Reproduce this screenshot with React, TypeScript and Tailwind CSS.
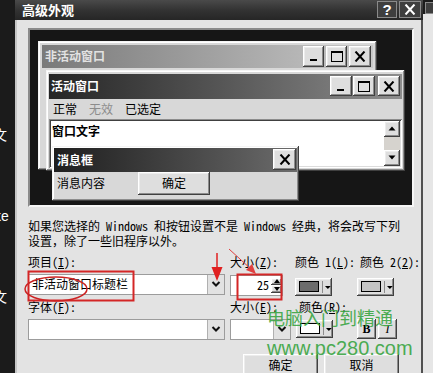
import React from "react";

const CJK = "font-['Noto_Sans_Mono_CJK_SC','Noto_Sans_CJK_SC',sans-serif]";
const CJKB = "font-['Noto_Sans_CJK_SC',sans-serif] font-bold";
const RAISED =
  "bg-[#dedede] shadow-[inset_-1px_-1px_0_#404040,inset_1px_1px_0_#ffffff,inset_-2px_-2px_0_#8c8c8c,inset_2px_2px_0_#ececec]";
const FRAME =
  "bg-[#d8d8d8] shadow-[inset_-1px_-1px_0_#404040,inset_1px_1px_0_#f4f4f4,inset_-2px_-2px_0_#8c8c8c,inset_2px_2px_0_#ffffff]";
const SUNKEN =
  "bg-white shadow-[inset_1px_1px_0_#8c8c8c,inset_-1px_-1px_0_#ffffff,inset_2px_2px_0_#404040,inset_-2px_-2px_0_#dcdcdc]";

type Kind = "min" | "max" | "close";

function Glyph({ kind }: { kind: Kind }) {
  if (kind === "min")
    return (
      <svg width="12" height="11" viewBox="0 0 12 11">
        <rect x="2" y="8" width="7" height="2" fill="#000" />
      </svg>
    );
  if (kind === "max")
    return (
      <svg width="12" height="11" viewBox="0 0 12 11">
        <rect x="0.5" y="0.5" width="11" height="10" fill="none" stroke="#000" />
        <rect x="0" y="0" width="12" height="2" fill="#000" />
      </svg>
    );
  return (
    <svg width="12" height="11" viewBox="0 0 12 11">
      <path d="M1.5 0.5 L10.5 10.5 M10.5 0.5 L1.5 10.5" stroke="#000" strokeWidth="2" />
    </svg>
  );
}

function CapBtn({ kind, className }: { kind: Kind; className: string }) {
  return (
    <div className={`flex items-center justify-center ${RAISED} ${className}`}>
      <Glyph kind={kind} />
    </div>
  );
}

function Chevron() {
  return (
    <svg width="10" height="8" viewBox="0 0 10 8">
      <path d="M1.5 2 L5 5.5 L8.5 2" fill="none" stroke="#111" strokeWidth="2" />
    </svg>
  );
}

function Combo({ className, children }: { className: string; children?: React.ReactNode }) {
  return (
    <div className={`flex h-[21px] border border-[#9c9c9c] bg-white ${className}`}>
      <div className="flex flex-1 items-center pl-[2px] text-[12px] text-black">{children}</div>
      <div className="flex w-[17px] items-center justify-center border-l border-[#b0b0b0] bg-[#e2e2e2]">
        <Chevron />
      </div>
    </div>
  );
}

function ColorBtn({ swatch }: { swatch: string }) {
  return (
    <div className={`flex h-[18px] w-[37px] items-center pl-[4px] ${RAISED}`}>
      <div className={`h-[11px] w-[21px] border border-black ${swatch}`} />
      <div className="ml-[3px] h-[12px] w-px bg-[#8c8c8c]" />
      <svg width="8" height="6" viewBox="0 0 8 6" className="ml-[1px]">
        <path d="M1 2 L7 2 L4 5 Z" fill="#000" />
      </svg>
    </div>
  );
}

function Tri({ up }: { up?: boolean }) {
  return (
    <svg width="8" height="5" viewBox="0 0 8 5">
      <path d={up ? "M4 0.5 L7.5 4.5 L0.5 4.5 Z" : "M0.5 0.5 L7.5 0.5 L4 4.5 Z"} fill="#000" />
    </svg>
  );
}

function Preview() {
  return (
    <div className="ml-[0px] h-[179px] w-[386px] border-2 border-t-[#8a8a8a] border-l-[#8a8a8a] border-b-[#f6f6f6] border-r-[#f6f6f6] bg-[#161616]">
      <div className="relative h-full w-full">
        {/* inactive window */}
        <div className={`absolute left-[8px] top-[11px] h-[129px] w-[339px] p-[4px] ${FRAME}`}>
          <div className="flex h-[23px] items-center bg-linear-to-r from-[#7a7a7a] to-[#c8c8c8] pl-[3px] pr-[2px]">
            <span className={`text-[12px] text-[#e2e2e2] ${CJKB}`}>非活动窗口</span>
            <div className="ml-auto flex gap-[2px]">
              <CapBtn kind="min" className="h-[21px] w-[21px]" />
              <CapBtn kind="max" className="h-[21px] w-[21px]" />
              <CapBtn kind="close" className="h-[21px] w-[22px]" />
            </div>
          </div>
        </div>

        {/* active window */}
        <div className={`absolute left-[16px] top-[40px] flex h-[101px] w-[359px] flex-col p-[3px] pt-[4px] ${FRAME}`}>
          <div className="flex h-[25px] items-center bg-linear-to-r from-[#262626] to-[#8e8e8e] pl-[2px] pr-[2px]">
            <span className={`text-[12px] text-white ${CJKB}`}>活动窗口</span>
            <div className="ml-auto flex">
              <CapBtn kind="min" className="h-[20px] w-[22px]" />
              <CapBtn kind="max" className="ml-px h-[20px] w-[22px]" />
              <CapBtn kind="close" className="ml-[3px] h-[20px] w-[22px]" />
            </div>
          </div>
          <div className={`flex h-[20px] items-center gap-[12px] pl-[4px] text-[12px] text-black ${CJK}`}>
            <span>正常</span>
            <span className="text-[#8c8c8c]">无效</span>
            <span>已选定</span>
          </div>
          <div className={`flex flex-1 p-[2px] ${SUNKEN}`}>
            <div className={`flex-1 pl-[1px] pt-[2px] text-[12px] leading-[15px] text-black ${CJKB}`}>窗口文字</div>
            <div className="flex w-[16px] flex-col bg-[#d6d3ce]">
              <div className={`flex h-[16px] items-center justify-center ${RAISED}`}>
                <Tri up />
              </div>
              <div className="flex-1" />
              <div className={`flex h-[16px] items-center justify-center ${RAISED}`}>
                <Tri />
              </div>
            </div>
          </div>
        </div>

        {/* message box */}
        <div className={`absolute left-[22px] top-[116px] flex h-[55px] w-[247px] flex-col p-[2px] ${FRAME}`}>
          <div className="flex h-[24px] items-center bg-linear-to-r from-[#1f1f1f] to-[#6c6c6c] pl-[3px] pr-px">
            <span className={`text-[12px] text-white ${CJKB}`}>消息框</span>
            <CapBtn kind="close" className="ml-auto h-[21px] w-[23px]" />
          </div>
          <div className="flex flex-1 items-start pl-[3px]">
            <span className={`pt-[3px] text-[12px] leading-[15px] text-black ${CJK}`}>消息内容</span>
            <div className={`ml-[33px] flex h-[23px] w-[72px] items-center justify-center text-[12px] text-black ${CJK} ${RAISED}`}>
              确定
            </div>
          </div>
        </div>
      </div>
    </div>
  );
}

function Label({ children, className = "" }: { children: React.ReactNode; className?: string }) {
  return (
    <div className={`h-[14px] whitespace-nowrap text-[12px] leading-[14px] text-black ${CJK} ${className}`}>{children}</div>
  );
}

export default function App() {
  return (
    <div className={`relative flex h-[373px] w-[433px] overflow-hidden bg-[#1b1b1b] ${CJK}`}>
      {/* desktop strip left */}
      <div className="relative w-[15px] shrink-0 overflow-hidden text-[14px] text-white">
        <span className="absolute left-[-7px] top-[124px]">文</span>
        <span className="absolute left-[-6px] top-[206px] font-['Liberation_Sans',sans-serif]">ke</span>
        <span className="absolute left-[-7px] top-[286px]">文</span>
      </div>

      {/* dialog */}
      <div className="flex w-[408px] shrink-0 flex-col">
        <div className="flex h-[22px] items-center bg-linear-to-b from-[#4a4a4a] via-[#333333] to-[#262626] pl-[7px] pr-[2px]">
          <span className={`text-[13px] text-white ${CJKB}`}>高级外观</span>
          <div className="ml-auto flex gap-[2px]">
            <div className="flex h-[17px] w-[20px] items-center justify-center border border-[#8a8a8a] bg-[#3e3e3e] text-[15px] font-bold leading-none text-white font-['Liberation_Sans',sans-serif]">
              ?
            </div>
            <div className="flex h-[17px] w-[22px] items-center justify-center border border-[#8a8a8a] bg-[#3e3e3e]">
              <svg width="12" height="11" viewBox="0 0 12 11">
                <path d="M1.5 0.5 L10.5 10.5 M10.5 0.5 L1.5 10.5" stroke="#fff" strokeWidth="2" />
              </svg>
            </div>
          </div>
        </div>

        <div className="flex flex-1 flex-col border-l-2 border-r-2 border-l-[#c6c6c6] border-r-[#505050] bg-[#e3e3e3] pl-[11px] pt-[8px]">
          <Preview />

          <div className="mt-[11px] text-[12px] leading-[15px] text-black">
            <div className="whitespace-nowrap">如果您选择的 Windows 和按钮设置不是 Windows 经典，将会改写下列</div>
            <div className="whitespace-nowrap">设置，除了一些旧程序以外。</div>
          </div>

          {/* row 1 */}
          <div className="mt-[7px] flex">
            <div className="w-[197px]">
              <Label>
                项目(<span className="underline">I</span>):
              </Label>
              <Combo className="mt-[5px] w-[197px]">
                <span className="pl-[1px]">非活动窗口标题栏</span>
              </Combo>
            </div>
            <div className="ml-[5px] w-[62px]">
              <Label>
                大小(<span className="underline">Z</span>):
              </Label>
              <div className="mt-[6px] flex h-[21px] w-[53px] border border-[#9c9c9c] bg-white">
                <div className="flex flex-1 items-center justify-end pr-[2px] text-[12px] text-black">25</div>
                <div className="flex w-[11px] flex-col py-[2px]">
                  <div className={`flex flex-1 items-center justify-center ${RAISED}`}>
                    <svg width="6" height="4" viewBox="0 0 6 4">
                      <path d="M3 0 L6 4 L0 4 Z" fill="#000" />
                    </svg>
                  </div>
                  <div className={`flex flex-1 items-center justify-center ${RAISED}`}>
                    <svg width="6" height="4" viewBox="0 0 6 4">
                      <path d="M0 0 L6 0 L3 4 Z" fill="#000" />
                    </svg>
                  </div>
                </div>
              </div>
            </div>
            <div className="ml-[3px] w-[40px]">
              <Label>
                颜色 1(<span className="underline">L</span>):
              </Label>
              <div className="mt-[9px]">
                <ColorBtn swatch="bg-[#6c6c6c]" />
              </div>
            </div>
            <div className="ml-[22px] w-[40px]">
              <Label className="pl-[3px]">
                颜色 2(<span className="underline">2</span>):
              </Label>
              <div className="mt-[9px]">
                <ColorBtn swatch="bg-[#c4c4c4]" />
              </div>
            </div>
          </div>

          {/* row 2 */}
          <div className="mt-[4px] flex">
            <div className="w-[197px]">
              <Label>
                字体(<span className="underline">F</span>):
              </Label>
              <Combo className="mt-[5px] w-[197px]" />
            </div>
            <div className="ml-[5px] w-[62px]">
              <Label>
                大小(<span className="underline">E</span>):
              </Label>
              <Combo className="mt-[5px] w-[61px]" />
            </div>
            <div className="ml-[3px] w-[40px]">
              <Label className="pl-[4px]">
                颜色(<span className="underline">R</span>):
              </Label>
              <div className="mt-[6px] pl-px">
                <ColorBtn swatch="bg-white" />
              </div>
            </div>
            <div className="ml-[22px] flex items-end gap-[2px] pb-px">
              <div className={`flex h-[20px] w-[19px] items-center justify-center text-[12px] font-bold text-black font-['Liberation_Serif',serif] ${RAISED}`}>
                B
              </div>
              <div className={`flex h-[20px] w-[19px] items-center justify-center text-[12px] italic text-black font-['Liberation_Serif',serif] ${RAISED}`}>
                I
              </div>
            </div>
          </div>

          {/* bottom buttons */}
          <div className="mt-[14px] ml-[215px] flex gap-[6px]">
            <div className={`flex h-[23px] w-[75px] items-center justify-center text-[12px] text-black ${RAISED}`}>确定</div>
            <div className={`flex h-[23px] w-[75px] items-center justify-center text-[12px] text-black ${RAISED}`}>取消</div>
          </div>
        </div>
      </div>

      {/* desktop strip right */}
      <div className="flex w-[10px] shrink-0 flex-col">
        <div className="h-[14px] bg-[#1b1b1b] pl-[2px] pt-[2px]">
          <div className="h-[12px] w-[10px] border border-[#8a8a8a] bg-[#3e3e3e]" />
        </div>
        <div className="flex-1 bg-[#e6e6e6]" />
      </div>

      {/* watermark */}
      <div className="pointer-events-none absolute left-[267px] top-[305px] text-[18px] leading-[24px] text-[#3aa643] opacity-90 font-['Noto_Sans_CJK_SC',sans-serif]">
        电脑入门到精通
      </div>
      <div className="pointer-events-none absolute left-[267px] top-[336px] text-[20px] leading-[24px] text-[#3aa643] opacity-90 font-['Liberation_Sans',sans-serif]">
        www.pc280.com
      </div>

      {/* annotations */}
      <svg className="pointer-events-none absolute left-0 top-0" width="433" height="373" viewBox="0 0 433 373">
        <rect x="28.5" y="271.5" width="105" height="29" fill="none" stroke="#d42626" strokeWidth="2" />
        <ellipse cx="56" cy="289" rx="31" ry="12" fill="none" stroke="#cc2222" strokeWidth="1.5" />
        <line x1="217" y1="253" x2="217" y2="270" stroke="#e02020" strokeWidth="1.5" />
        <path d="M211.5 267 L222.5 267 L217 281 Z" fill="#e02020" />
        <rect x="237.5" y="274.5" width="44" height="25" fill="none" stroke="#d42626" strokeWidth="2" />
        <line x1="229" y1="249" x2="252" y2="270" stroke="#e04040" strokeWidth="1" />
        <path d="M256 274 L246 270 L252 264 Z" fill="#e04040" />
      </svg>
    </div>
  );
}
